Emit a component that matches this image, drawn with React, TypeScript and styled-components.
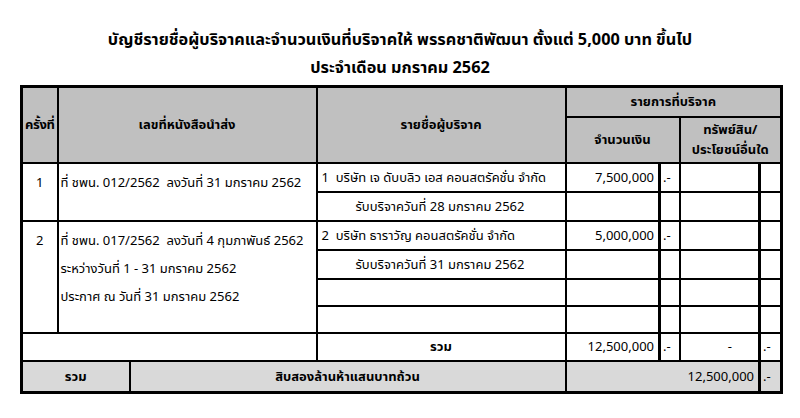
import React from 'react';
import styled, { createGlobalStyle } from 'styled-components';

const GlobalStyle = createGlobalStyle`
  html, body {
    margin: 0;
    padding: 0;
    background: #ffffff;
  }
  body {
    font-family: Tahoma, "Noto Sans Thai", "Noto Sans", "DejaVu Sans", sans-serif;
    color: #000000;
  }
`;

const Page = styled.div`
  width: 800px;
  height: 418px;
  padding: 26px 20px 0 20px;
  box-sizing: border-box;
  overflow: hidden;
`;

const Title = styled.h1`
  margin: 0;
  text-align: center;
  font-size: 16.3px;
  font-weight: bold;
  line-height: 28px;
`;

const Sheet = styled.table`
  margin-top: 3px;
  width: 760px;
  table-layout: fixed;
  border-collapse: collapse;
  border: 3px solid #000;
  font-size: 13px;
`;

const HeadCell = styled.th<{ $h?: number; $tight?: boolean }>`
  background: #c0c0c0;
  border: 2px solid #000;
  font-weight: bold;
  text-align: center;
  vertical-align: middle;
  padding: 0 ${p => (p.$tight ? 0 : 2)}px;
  line-height: 20px;
  white-space: nowrap;
  overflow: hidden;
  letter-spacing: ${p => (p.$tight ? '-0.3px' : 'normal')};
  height: ${p => p.$h ?? 28}px;
`;

const Cell = styled.td<{
  $align?: 'left' | 'center' | 'right';
  $thickRight?: boolean;
  $top?: boolean;
  $bold?: boolean;
  $pad?: number;
  $shade?: boolean;
  $h?: number;
}>`
  border: 2px solid #000;
  border-right-width: ${p => (p.$thickRight ? 3 : 2)}px;
  height: ${p => p.$h ?? 27}px;
  padding: 0 ${p => p.$pad ?? 4}px;
  text-align: ${p => p.$align ?? 'left'};
  vertical-align: ${p => (p.$top ? 'top' : 'middle')};
  font-weight: ${p => (p.$bold ? 'bold' : 'normal')};
  background: ${p => (p.$shade ? '#d9d9d9' : 'transparent')};
  white-space: pre;
  overflow: hidden;
`;

const Lines = styled.div`
  padding-top: 5px;
  line-height: 28px;
`;

const Indent = styled.span`
  padding-left: 34px;
`;

type Entry = {
  no: string;
  letter: string[];
  rows: { text: string; indent?: boolean; amount?: string; h?: number }[];
};

const entries: Entry[] = [
  {
    no: '1',
    letter: ['ที่ ชพน. 012/2562  ลงวันที่ 31 มกราคม 2562'],
    rows: [
      { text: '1  บริษัท เจ ดับบลิว เอส คอนสตรัคชั่น จำกัด', amount: '7,500,000' },
      { text: 'รับบริจาควันที่ 28 มกราคม 2562', indent: true },
    ],
  },
  {
    no: '2',
    letter: [
      'ที่ ชพน. 017/2562  ลงวันที่ 4 กุมภาพันธ์ 2562',
      'ระหว่างวันที่ 1 - 31 มกราคม 2562',
      'ประกาศ ณ วันที่ 31 มกราคม 2562',
    ],
    rows: [
      { text: '2  บริษัท ธาราวัญ คอนสตรัคชั่น จำกัด', amount: '5,000,000' },
      { text: 'รับบริจาควันที่ 31 มกราคม 2562', indent: true },
      { text: '', h: 25 },
      { text: '', h: 25 },
    ],
  },
];

const App: React.FC = () => {
  return (
    <>
      <GlobalStyle />
      <Page>
        <Title>บัญชีรายชื่อผู้บริจาคและจำนวนเงินที่บริจาคให้ พรรคชาติพัฒนา ตั้งแต่ 5,000 บาท ขึ้นไป</Title>
        <Title>ประจำเดือน มกราคม 2562</Title>
        <Sheet>
          <colgroup>
            <col style={{ width: 36 }} />
            <col style={{ width: 72 }} />
            <col style={{ width: 187 }} />
            <col style={{ width: 249 }} />
            <col style={{ width: 94 }} />
            <col style={{ width: 20 }} />
            <col style={{ width: 80 }} />
            <col style={{ width: 22 }} />
          </colgroup>
          <thead>
            <tr>
              <HeadCell rowSpan={2} $tight>ครั้งที่</HeadCell>
              <HeadCell rowSpan={2} colSpan={2}>เลขที่หนังสือนำส่ง</HeadCell>
              <HeadCell rowSpan={2}>รายชื่อผู้บริจาค</HeadCell>
              <HeadCell colSpan={4} $h={28}>รายการที่บริจาค</HeadCell>
            </tr>
            <tr>
              <HeadCell colSpan={2} $h={44}>จำนวนเงิน</HeadCell>
              <HeadCell colSpan={2} $h={44}>
                ทรัพย์สิน/
                <br />
                ประโยชน์อื่นใด
              </HeadCell>
            </tr>
          </thead>
          <tbody>
            {entries.map(entry =>
              entry.rows.map((row, i) => (
                <tr key={entry.no + '-' + i}>
                  {i === 0 && (
                    <>
                      <Cell rowSpan={entry.rows.length} $align="center" $top>
                        <Lines>{entry.no}</Lines>
                      </Cell>
                      <Cell rowSpan={entry.rows.length} colSpan={2} $top $pad={2}>
                        <Lines>
                          {entry.letter.map(l => (
                            <div key={l}>{l}</div>
                          ))}
                        </Lines>
                      </Cell>
                    </>
                  )}
                  <Cell $h={row.h}>{row.indent ? <Indent>{row.text}</Indent> : row.text}</Cell>
                  <Cell $h={row.h} $align="right" $thickRight>{row.amount ?? ''}</Cell>
                  <Cell $h={row.h} $pad={2}>{row.amount ? '.-' : ''}</Cell>
                  <Cell $h={row.h} $thickRight />
                  <Cell $h={row.h} />
                </tr>
              ))
            )}
            <tr>
              <Cell colSpan={3} $h={26} />
              <Cell $align="center" $bold $h={26}>รวม</Cell>
              <Cell $align="right" $thickRight $h={26}>12,500,000</Cell>
              <Cell $pad={2} $h={26}>.-</Cell>
              <Cell $align="right" $thickRight $pad={26} $h={26}>-</Cell>
              <Cell $pad={2} $h={26}>.-</Cell>
            </tr>
          </tbody>
          <tfoot>
            <tr>
              <Cell $shade $align="center" $bold colSpan={2} $h={29}>รวม</Cell>
              <Cell $shade $align="center" $bold colSpan={2}>สิบสองล้านห้าแสนบาทถ้วน</Cell>
              <Cell $shade $align="right" $thickRight colSpan={3}>12,500,000</Cell>
              <Cell $shade $pad={2}>.-</Cell>
            </tr>
          </tfoot>
        </Sheet>
      </Page>
    </>
  );
};

export default App;
